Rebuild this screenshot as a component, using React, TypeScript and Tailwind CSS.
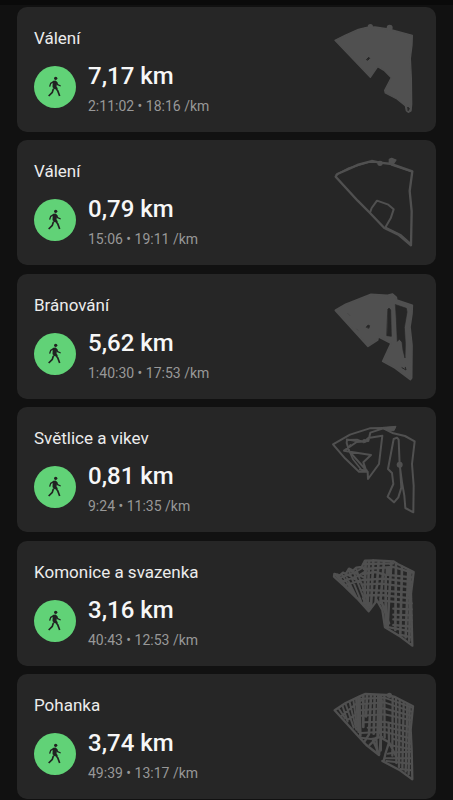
type Activity = {
  title: string;
  distance: string;
  duration: string;
  pace: string;
  viewBox: string;
  track: React.ReactNode;
};

const activities: Activity[] = [
  {
    title: "Válení",
    distance: "7,17 km",
    duration: "2:11:02",
    pace: "18:16 /km",
    viewBox: "0 0 300 315",
    track: (
      <>
        <path
          d="M30 76 L60 61 L100 43 L125 37 L150 36 L190 42 L262 61 L261 90 L256 130 L259 190 L260 268 L258 288 L250 292 L244 287 L241 272 L216 252 L181 234 L179 226 L199 188 L177 166 L158 155 L136 187 Z"
          fill="#505050"
          strokeWidth="4"
        />
        <circle cx="136" cy="35" r="8" fill="#505050" stroke="none" />
        <circle cx="194" cy="38" r="9" fill="#505050" stroke="none" />
        <path d="M125 133 L131 127 L134 130 L129 135 Z" fill="#262626" stroke="#262626" strokeWidth="3" />
        <path d="M249 277 L253 281 L250 286 Z" fill="#262626" stroke="#262626" strokeWidth="3" />
      </>
    ),
  },
  {
    title: "Válení",
    distance: "0,79 km",
    duration: "15:06",
    pace: "19:11 /km",
    viewBox: "0 0 300 315",
    track: (
      <>
        <path
          d="M32 86 L37 78 L65 66 L100 50 L140 39 L165 44 L200 48 L262 70 L254 129 L260 190 L258 292 L220 260 L178 240 L135 195 L98 158 Z"
          strokeWidth="7"
        />
        <path d="M34 80 L72 60 L134 42 L170 43 M200 51 L258 70 M184 239 L228 261 L256 286" strokeWidth="5" />
        <path d="M135 194 L140 180 L156 158 L190 170 L206 184 L197 211 L180 240" strokeWidth="6" />
        <circle cx="165" cy="46" r="8" fill="#505050" stroke="none" />
        <path d="M193 34 L200 31 L213 36 L205 48 L193 47 Z" fill="#505050" strokeWidth="4" />
      </>
    ),
  },
  {
    title: "Bránování",
    distance: "5,62 km",
    duration: "1:40:30",
    pace: "17:53 /km",
    viewBox: "0 0 300 315",
    track: (
      <>
        <path
          d="M31 85 L62 67 L138 37 L188 40 L202 36 L214 46 L215 54 L262 70 L261 95 L255 135 L261 190 L260 288 L256 293 L210 258 L173 238 L198 184 L160 164 L158 174 L129 193 L80 139 Z"
          fill="#505050"
          strokeWidth="5"
        />
        <path d="M189 82 L192 78 L197 84 L199 163 L186 161 Z" fill="#262626" stroke="#262626" strokeWidth="2" />
        <path
          d="M212 68 L244 79 L246 90 L238 136 L241 185 L240 228 L234 204 L231 180 L223 172 L217 178 L214 110 Z"
          fill="#262626"
          stroke="#262626"
          strokeWidth="2"
        />
        <path d="M124 135 L129 129 L134 131 L132 138 Z" fill="#262626" stroke="#262626" strokeWidth="2" />
        <path d="M231 257 L243 264 L241 256" stroke="#262626" strokeWidth="3" />
        <path d="M68 94 L75 101 M95 141 L99 145" stroke="#484848" strokeWidth="3" />
      </>
    ),
  },
  {
    title: "Světlice a vikev",
    distance: "0,81 km",
    duration: "9:24",
    pace: "11:35 /km",
    viewBox: "0 -2 300 315",
    track: (
      <>
        <path
          d="M208 37 L175 37 L134 38 L75 57 L24 86 L60 128 L102 168 L128 168 L129 190 L162 145 L172 60 L130 67 L116 80 L96 72 L66 73 L65 82 L73 107 L123 163 L115 140 L138 118 L75 108 L57 105 L95 79 L130 76 L136 51 L175 38"
          strokeWidth="6"
        />
        <path d="M65 71 L98 77 L124 77 M104 162 L126 164 M63 104 L76 88 M73 106 L84 131 L112 166" strokeWidth="5" />
        <path
          d="M175 38 L205 53 L240 61 L269 77 L261 145 L266 210 L265 290 L241 277 L238 240 L231 200 L224 148 L221 72 L216 66 L206 70 L189 160 L201 172 L205 205 L188 243 L207 260 L220 245 L229 216 L225 150"
          strokeWidth="6"
        />
        <path d="M175 35 L213 32 L207 45 L190 45 Z" fill="#505050" strokeWidth="3" />
        <circle cx="118" cy="76" r="6" fill="#505050" stroke="none" />
        <circle cx="224" cy="147" r="9" fill="#505050" stroke="none" />
      </>
    ),
  },
  {
    title: "Komonice a svazenka",
    distance: "3,16 km",
    duration: "40:43",
    pace: "12:53 /km",
    viewBox: "0 -3 300 315",
    track: (
      <>
        <path
          d="M28 72 L45 76 L54 68 L62 72 L72 56 L84 62 L94 53 L110 51 L120 32 L150 31 L205 34 L218 42 L266 66 L258 130 L262 287 L222 257 L180 232 L172 180 L156 151 L131 184 L96 145 L60 110 L27 80 Z"
          strokeWidth="7"
        />
        <path
          d="M32 76 L80 126 L130 178 M38 74 L66 112 M50 72 L84 128 M62 76 L96 144 M72 64 L110 158 M84 62 L124 164 M94 58 L136 176 M44 84 L92 66 L122 48 M48 96 L98 78 L125 62 M66 104 L112 90 M62 70 L110 100 M76 62 L120 84"
          strokeWidth="6"
        />
        <path
          d="M122 34 L118 160 M132 34 L128 170 M145 32 L138 172 M161 34 L152 154 M177 34 L166 158 M182 76 L182 230 M199 38 L192 152 L188 228 M213 44 L211 240 M231 50 L226 250 M250 60 L242 262 M256 66 L253 272 M166 145 L192 220"
          strokeWidth="8"
        />
        <path
          d="M116 42 L205 40 M116 57 L205 51 L262 68 M114 72 L150 66 L180 74 L262 82 M114 90 L175 86 L260 96 M110 104 L168 101 L258 112 M112 120 L170 122 L258 128 M118 136 L168 135 L258 145 M170 152 L260 160 M205 176 L260 178 M205 194 L260 196 M205 208 L260 211 M205 225 L260 230 M181 230 L260 245 M224 254 L260 262"
          strokeWidth="7"
        />
        <path d="M184 54 L199 54 L196 76 L184 72 Z M112 144 L136 160 L130 178 Z M205 34 L194 42" fill="#505050" strokeWidth="4" />
      </>
    ),
  },
  {
    title: "Pohanka",
    distance: "3,74 km",
    duration: "49:39",
    pace: "13:17 /km",
    viewBox: "0 -3 300 315",
    track: (
      <>
        <path
          d="M29 82 L62 60 L104 40 L120 33 L184 36 L210 42 L264 70 L257 140 L260 200 L262 289 L222 260 L172 234 M29 82 L78 136 L124 186 L162 216 L168 164 L192 178 L182 210 L176 234"
          strokeWidth="7"
        />
        <circle cx="193" cy="37" r="8" fill="#505050" stroke="none" />
        <path
          d="M42 78 L60 106 M53 70 L68 116 M62 63 L86 134 M74 58 L94 140 M85 51 L96 130 M50 98 L86 68 L116 48 M66 112 L92 94"
          strokeWidth="6"
        />
        <path
          d="M94 46 L101 146 M103 42 L106 158 M115 38 L115 132 M126 38 L123 100 M138 38 L132 150 M149 38 L146 152 M160 38 L158 158 M168 38 L167 202"
          strokeWidth="8"
        />
        <path d="M97 48 L104 44 L104 150 L98 142 Z M160 48 L172 50 L169 150 L160 154 Z" fill="#505050" strokeWidth="3" />
        <path
          d="M178 40 L179 164 M191 120 L192 172 M203 44 L202 218 M213 48 L214 240 M224 54 L222 252 M236 59 L232 258 M247 64 L242 266 M254 70 L251 274 M160 160 L134 186 M154 164 L156 204 M144 172 L162 214 M132 154 L117 178 M192 178 L216 226"
          strokeWidth="7"
        />
        <path
          d="M108 47 L178 44 L262 74 M108 64 L178 58 L260 86 M108 82 L176 76 L258 98 M108 98 L178 94 L258 112 M115 118 L178 116 L256 132 M128 134 L180 132 L256 148 M108 150 L176 146 L256 166 M108 164 L138 168 L172 162 M205 168 L256 182 M192 186 L256 198 M188 212 L214 208 L258 206 M180 226 L256 226 M184 234 L256 242 M226 258 L258 262"
          strokeWidth="6"
        />
      </>
    ),
  },
];

const WalkIcon = () => {
  return (
    <svg
      className="h-[30px] w-[22px]"
      viewBox="0 0 66 90"
      fill="none"
      stroke="#222222"
      strokeLinejoin="round"
      aria-hidden="true"
    >
      <circle cx="35" cy="19" r="5" fill="#222222" stroke="none" />
      <path d="M27 27 L35 26 L40 31 L37 43 L41 50 L29 51 L26 44 Z" fill="#222222" strokeWidth="1" />
      <path d="M29 29 L20 34 L17 44" strokeWidth="4" />
      <path d="M37 31 L41 38 L50 42" strokeWidth="4" />
      <path d="M33 46 L41 56 L47 72" strokeWidth="5" />
      <path d="M28 51 L25 61 L14 72" strokeWidth="5" />
    </svg>
  );
};

const ActivityCard = ({ activity }: { activity: Activity }) => {
  return (
    <li className="flex items-start justify-between rounded-[10px] bg-[#262626] pl-[17px] pr-[11px]">
      <div className="min-w-0 pt-[21px] pb-4">
        <h2 className="text-[17px] leading-5 text-[#ececec]">{activity.title}</h2>
        <div className="mt-3 flex items-start gap-3">
          <div className="mt-[6px] flex size-[42px] shrink-0 items-center justify-center rounded-full bg-[#61d277]">
            <WalkIcon />
          </div>
          <div className="flex flex-col gap-1">
            <p className="text-2xl leading-8 font-medium text-[#f7f7f7]">{activity.distance}</p>
            <p className="text-sm leading-5 text-[#989898]">
              {activity.duration} • {activity.pace}
            </p>
          </div>
        </div>
      </div>
      <svg
        className="mt-2 h-[105px] w-[100px] shrink-0"
        viewBox={activity.viewBox}
        fill="none"
        stroke="#505050"
        strokeLinejoin="round"
        strokeLinecap="round"
        aria-hidden="true"
      >
        {activity.track}
      </svg>
    </li>
  );
};

const App = () => {
  return (
    <main className="flex min-h-screen flex-col bg-[#111111] font-[Roboto,sans-serif]">
      <div className="h-[5px] bg-[#0a0a0a]" />
      <ul className="flex grow flex-col justify-between gap-2 px-[17px] pt-[2px] pb-px">
        {activities.map((activity) => (
          <ActivityCard key={activity.distance} activity={activity} />
        ))}
      </ul>
    </main>
  );
};

export default App;
